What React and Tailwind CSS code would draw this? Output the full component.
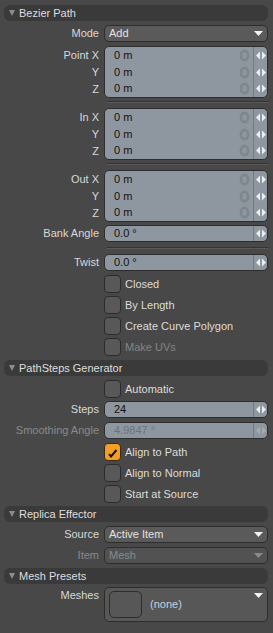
import React from 'react';

const FONT = "font-['Liberation_Sans',Arial,sans-serif]";

function Arrows({ dim }) {
  const c = dim ? '#a4abb1' : '#eceef0';
  return (
    <svg width="10" height="9" viewBox="0 0 10 9">
      <polygon points="0,4.5 4,0.5 4,8.5" fill={c} />
      <polygon points="6,0.5 10,4.5 6,8.5" fill={c} />
    </svg>
  );
}

function Ring() {
  return (
    <svg width="11" height="13" viewBox="0 0 11 13">
      <ellipse cx="5.5" cy="6.5" rx="3.6" ry="4.6" fill="none" stroke="#7f868c" strokeWidth="2.6" />
    </svg>
  );
}

function Caret({ dim }) {
  return (
    <svg width="9" height="6" viewBox="0 0 9 6">
      <polygon points="0,0 9,0 4.5,5" fill={dim ? '#8a8a8a' : '#f2f2f2'} />
    </svg>
  );
}

function Header({ title, className = '' }) {
  return (
    <div className={`ml-[4px] w-[264px] h-[16px] rounded-[6px] bg-[#3a3a3a] flex items-center ${className}`}>
      <svg width="6" height="6" viewBox="0 0 6 6" className="ml-[5px]">
        <polygon points="0,0 6,0 3,6" fill="#8c8c8c" />
      </svg>
      <span className="ml-[4px] text-[#dedede]">{title}</span>
    </div>
  );
}

function Label({ children, dim }) {
  return (
    <div className={`w-[99px] h-[17px] flex items-center justify-end ${dim ? 'text-[#8a8a8a]' : 'text-[#d8d8d8]'}`}>
      {children}
    </div>
  );
}

function Dropdown({ label, value, dim, className = '' }) {
  return (
    <div className={`flex ${className}`}>
      <Label dim={dim}>{label}</Label>
      <div className={`ml-[5px] w-[164px] h-[17px] rounded-[5px] border border-[#2d2d2d] flex items-center ${dim ? 'bg-[#525252] text-[#8a8a8a]' : 'bg-[#5a5a5a] text-[#e2e2e2]'}`}>
        <span className="ml-[4px] flex-1">{value}</span>
        <span className="mr-[4px] flex items-center"><Caret dim={dim} /></span>
      </div>
    </div>
  );
}

function Vector({ labels, className = '' }) {
  return (
    <div className={`flex ${className}`}>
      <div className="flex flex-col pt-[1px]">
        {labels.map((l) => <Label key={l}>{l}</Label>)}
      </div>
      <div className="ml-[5px] w-[164px] h-[52px] rounded-[5px] border border-[#2d2d2d] bg-[#8e979f] flex">
        <div className="flex-1 flex flex-col pt-[0.5px]">
          {labels.map((l) => (
            <div key={l} className="h-[17px] flex items-center">
              <span className="ml-[9px] flex-1 text-[#121212]">0 m</span>
              <span className="mr-[3px] flex items-center"><Ring /></span>
            </div>
          ))}
        </div>
        <div className="w-[14px] border-l border-[#737b82] flex flex-col pt-[0.5px]">
          {labels.map((l) => (
            <div key={l} className="h-[17px] flex items-center justify-center"><Arrows /></div>
          ))}
        </div>
      </div>
    </div>
  );
}

function Field({ label, value, dim, className = '' }) {
  return (
    <div className={`flex ${className}`}>
      <Label dim={dim}>{label}</Label>
      <div className="ml-[5px] w-[164px] h-[17px] rounded-[5px] border border-[#2d2d2d] bg-[#8e979f] flex items-center">
        <span className={`ml-[9px] flex-1 ${dim ? 'text-[#6c737a]' : 'text-[#121212]'}`}>{value}</span>
        <div className="w-[14px] h-full border-l border-[#737b82] flex items-center justify-center"><Arrows dim={dim} /></div>
      </div>
    </div>
  );
}

function Check({ label, checked, dim, className = '' }) {
  return (
    <div className={`flex items-center h-[18px] ${className}`}>
      <div className={`ml-[104px] w-[17px] h-[18px] rounded-[4px] border flex items-center justify-center ${checked ? 'bg-[#f29f2a] border-[#3a2a10]' : 'bg-[#585858] border-[#2b2b2b]'}`}>
        {checked && (
          <svg width="11" height="11" viewBox="0 0 11 11">
            <path d="M2 7 L4 9.5 L9.5 3" fill="none" stroke="#1a1208" strokeWidth="2" />
          </svg>
        )}
      </div>
      <span className={`ml-[4px] ${dim ? 'text-[#858585]' : 'text-[#dcdcdc]'}`}>{label}</span>
    </div>
  );
}

function Separator({ className = '' }) {
  return (
    <div className={`ml-[107px] w-[161px] ${className}`}>
      <div className="h-[1px] bg-[#333333]" />
      <div className="h-[1px] bg-[#5a5a5a]" />
    </div>
  );
}

export default function App() {
  return (
    <div className={`w-[273px] h-[633px] bg-[#484848] text-[11px] leading-none ${FONT} flex flex-col pt-[5px] overflow-hidden`}>
      <Header title="Bezier Path" />
      <Dropdown label="Mode" value="Add" className="mt-[4px]" />
      <Vector labels={['Point X', 'Y', 'Z']} className="mt-[4px]" />
      <Separator className="mt-[3px]" />
      <Vector labels={['In X', 'Y', 'Z']} className="mt-[5px]" />
      <Separator className="mt-[3px]" />
      <Vector labels={['Out X', 'Y', 'Z']} className="mt-[5px]" />
      <Field label="Bank Angle" value="0.0 °" className="mt-[3px]" />
      <Separator className="mt-[5px]" />
      <Field label="Twist" value="0.0 °" className="mt-[5px]" />
      <Check label="Closed" className="mt-[4px]" />
      <Check label="By Length" className="mt-[3px]" />
      <Check label="Create Curve Polygon" className="mt-[3px]" />
      <Check label="Make UVs" dim className="mt-[3px]" />

      <Header title="PathSteps Generator" className="mt-[4px]" />
      <Check label="Automatic" className="mt-[4px]" />
      <Field label="Steps" value="24" className="mt-[3px]" />
      <Field label="Smoothing Angle" value="4.9847 °" dim className="mt-[4px]" />
      <Check label="Align to Path" checked className="mt-[4px]" />
      <Check label="Align to Normal" className="mt-[3px]" />
      <Check label="Start at Source" className="mt-[3px]" />

      <Header title="Replica Effector" className="mt-[3px]" />
      <Dropdown label="Source" value="Active Item" className="mt-[4px]" />
      <Dropdown label="Item" value="Mesh" dim className="mt-[4px]" />

      <Header title="Mesh Presets" className="mt-[4px]" />
      <div className="flex mt-[3px]">
        <Label>Meshes</Label>
        <div className="ml-[5px] w-[164px] h-[35px] rounded-[5px] border border-[#2d2d2d] bg-[#575757] flex items-center relative">
          <div className="ml-[4px] w-[33px] h-[27px] rounded-[5px] border border-[#2d2d2d]" />
          <span className="ml-[8px] text-[#c9d0dc]">(none)</span>
          <span className="absolute right-[4px] top-[5px] flex"><Caret /></span>
        </div>
      </div>
    </div>
  );
}
